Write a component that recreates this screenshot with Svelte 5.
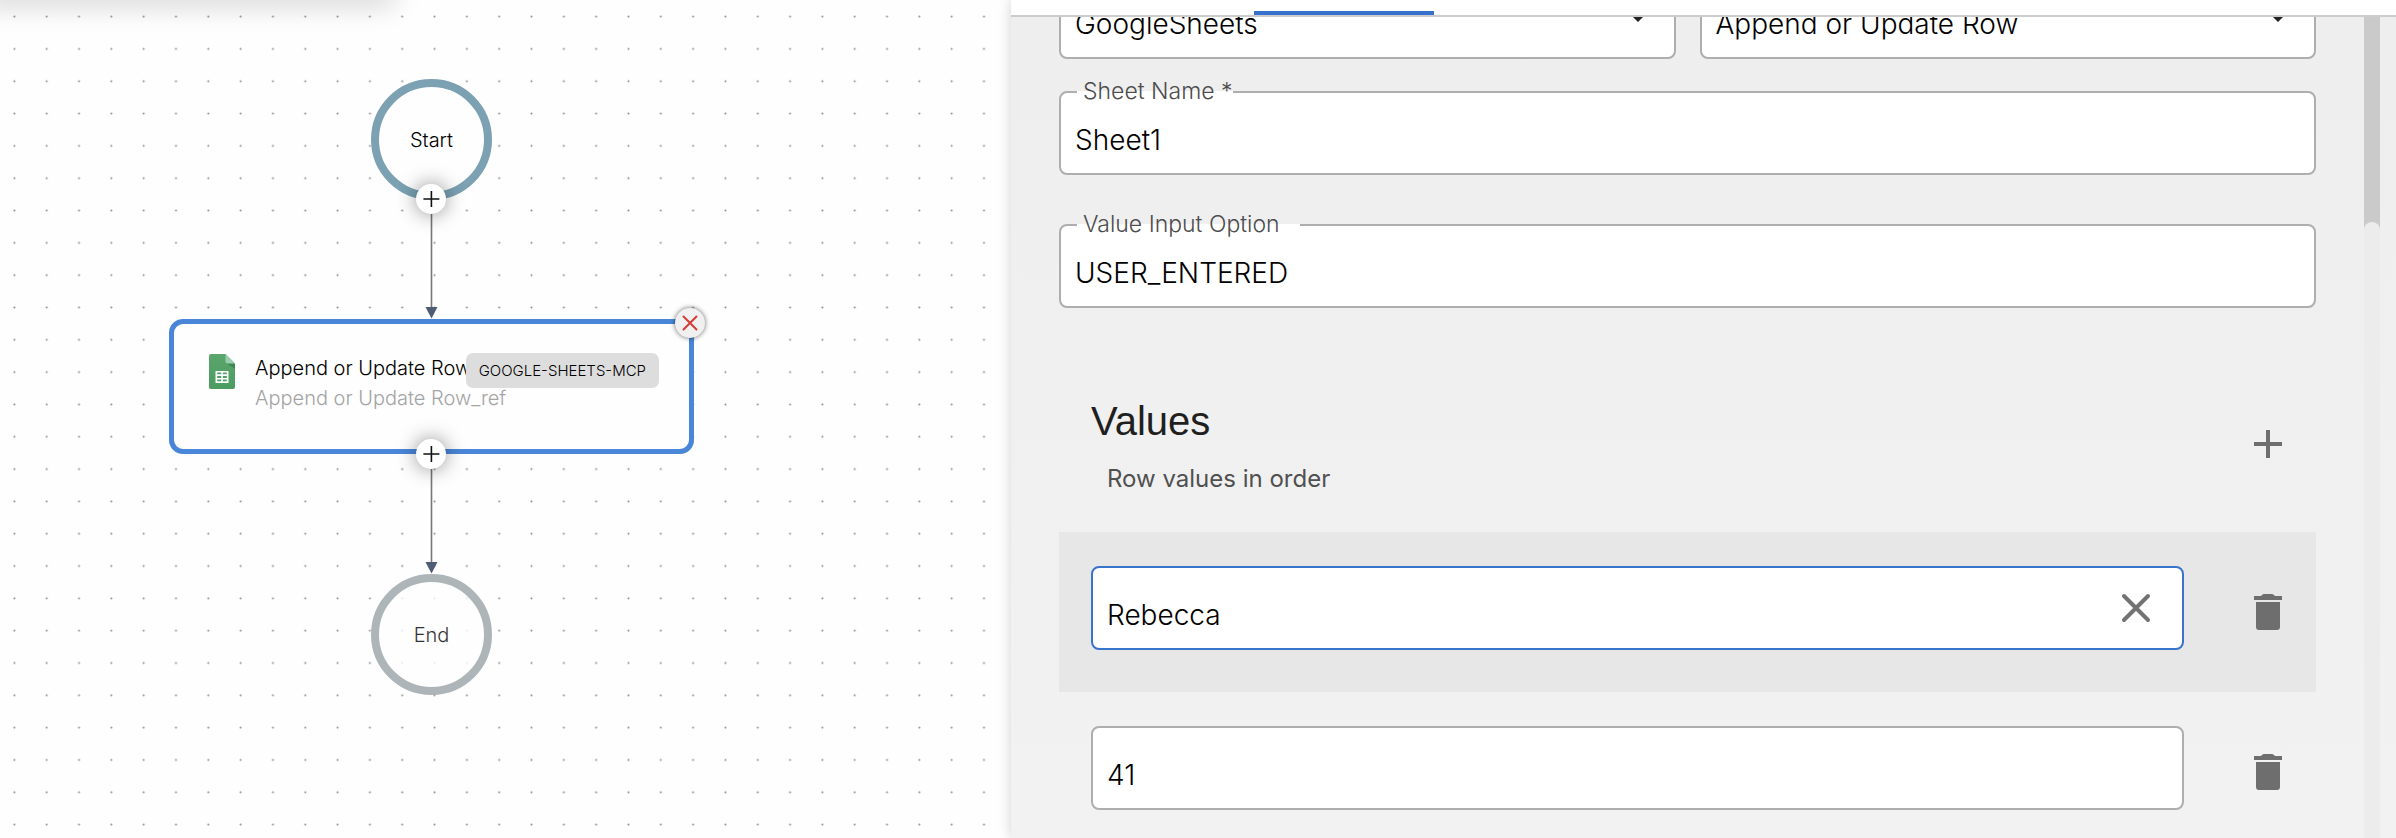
<script>
  let integration = $state('GoogleSheets');
  let action = $state('Append or Update Row');
  let sheetName = $state('Sheet1');
  let inputOption = $state('USER_ENTERED');
  let rows = $state([
    { value: 'Rebecca', active: true },
    { value: '41', active: false }
  ]);
</script>

{#snippet plus()}
  <svg viewBox="0 0 30 30" width="30" height="30" aria-hidden="true">
    <path d="M15.400 7v16M7.400 15h16" fill="none" stroke="#111" stroke-width="1.6" />
  </svg>
{/snippet}

<div class="app">
  <main class="canvas">
    <svg class="graph" aria-hidden="true">
      <defs>
        <pattern id="dots" x="-1.76" y="0.44" width="32.32" height="32.32" patternUnits="userSpaceOnUse">
          <circle cx="16.16" cy="16.16" r="1" fill="#8b8b8b" />
        </pattern>
      </defs>
      <rect width="100%" height="100%" fill="url(#dots)" />
      <path d="M431.5 199V308M431.5 454V564" stroke="#777" stroke-width="1.6" />
      <path d="M425.5 307h12l-6 11.5zM425.5 562h12l-6 11.5z" fill="#4d5b75" />
    </svg>
    <div class="toolbar-edge"></div>

    <div class="terminal start">Start</div>
    <div class="terminal end">End</div>

    <article class="step">
      <svg class="sheet-icon" viewBox="0 0 26 35" width="26" height="35" aria-hidden="true">
        <defs>
          <linearGradient id="sheet" x1="0" y1="0" x2="0" y2="1">
            <stop offset="0" stop-color="#5aa66d" />
            <stop offset="1" stop-color="#4b9c60" />
          </linearGradient>
        </defs>
        <path d="M2 0h14.5L26 9.5V33a2 2 0 0 1-2 2H2a2 2 0 0 1-2-2V2a2 2 0 0 1 2-2z" fill="url(#sheet)" />
        <path d="M17.5 9.2L26 15V9.5z" fill="#3f8551" />
        <path d="M16.5 0L26 9.5h-7.500a2 2 0 0 1-2-2z" fill="#97ceae" />
        <path d="M6.500 17h13v12h-13zM8.200 18.600v1.700h4v-1.700zM13.800 18.600v1.700h4v-1.700zM8.200 22v1.900h4v-1.900zM13.800 22v1.900h4v-1.900zM8.200 25.600v1.700h4v-1.700zM13.800 25.600v1.700h4v-1.700z" fill="#fff" fill-rule="evenodd" />
      </svg>
      <div class="step-text">
        <div>Append or Update Row</div>
        <div class="ref">Append or Update Row_ref</div>
      </div>
      <span class="badge">GOOGLE-SHEETS-MCP</span>
      <button class="round remove" aria-label="Remove step">
        <svg viewBox="0 0 30 30" width="30" height="30" aria-hidden="true">
          <path d="M8.500 8.500l13 13M21.500 8.500l-13 13" fill="none" stroke="#d43c36" stroke-width="2" stroke-linecap="round" />
        </svg>
      </button>
    </article>

    <button class="round add first" aria-label="Add step after Start">{@render plus()}</button>
    <button class="round add second" aria-label="Add step before End">{@render plus()}</button>
  </main>

  <aside class="panel">
    <header class="tabs"><div class="tab-indicator"></div></header>
    <div class="body">
      <form class="form" onsubmit={(e) => e.preventDefault()}>
        <div class="pair">
          <div class="select">
            <select class="box" aria-label="Integration" bind:value={integration}>
              <option>GoogleSheets</option>
            </select>
            <svg viewBox="0 0 20 10" width="20" height="10" aria-hidden="true"><path d="M0 0h20L10 10z" fill="#222" /></svg>
          </div>
          <div class="select">
            <select class="box" aria-label="Action" bind:value={action}>
              <option>Append or Update Row</option>
            </select>
            <svg viewBox="0 0 20 10" width="20" height="10" aria-hidden="true"><path d="M0 0h20L10 10z" fill="#222" /></svg>
          </div>
        </div>

        <div class="field">
          <label for="sheet-name">Sheet Name *</label>
          <input class="box" id="sheet-name" bind:value={sheetName} />
        </div>
        <div class="field optional">
          <label for="input-option">Value Input Option</label>
          <input class="box" id="input-option" bind:value={inputOption} />
        </div>

        <section class="values">
          <div class="values-head">
            <div class="values-text">
              <h2>Values</h2>
              <p>Row values in order</p>
            </div>
            <button class="icon" type="button" aria-label="Add value">
              <svg viewBox="0 0 24 24" width="48" height="48" aria-hidden="true"><path d="M19 13h-6v6h-2v-6H5v-2h6V5h2v6h6z" /></svg>
            </button>
          </div>
          {#each rows as row, i}
            <div class="row" class:active={row.active}>
              <div class="entry">
                <input class="box" aria-label={`Value ${i + 1}`} bind:value={row.value} />
                {#if row.active}
                  <button class="icon clear" type="button" aria-label="Clear value">
                    <svg viewBox="0 0 48 48" width="48" height="48" aria-hidden="true"><path d="M12 12l24 24M36 12L12 36" fill="none" stroke="#737373" stroke-width="4" stroke-linecap="round" /></svg>
                  </button>
                {/if}
              </div>
              <button class="icon" type="button" aria-label="Delete value">
                <svg viewBox="0 0 48 48" width="48" height="48" aria-hidden="true"><path d="M12 14h24v25a3 3 0 0 1-3 3H15a3 3 0 0 1-3-3zM10 8h7l1-1c.6-.7 1.300-1 2.200-1h7.600c.9 0 1.600.3 2.200 1l1 1h7v4H10z" /></svg>
              </button>
            </div>
          {/each}
        </section>
      </form>
      <div class="scrollbar"><div class="thumb"></div><div class="track"></div></div>
    </div>
  </aside>
</div>

<style>
  :global(body) {
    margin: 0;
  }
  .app {
    display: grid;
    grid-template-columns: 1011fr 1385fr;
    height: 100vh;
    overflow: hidden;
    background: #fefefe;
    color: #000;
    font-family: Inter, 'Liberation Sans', sans-serif;
    font-weight: 300;
  }
  button {
    padding: 0;
    border: 0;
    background: none;
    cursor: pointer;
  }
  svg {
    display: block;
  }

  /* Flow canvas */
  .canvas {
    position: relative;
    overflow: hidden;
    font-size: 20px;
  }
  .graph {
    position: absolute;
    inset: 0;
    width: 100%;
    height: 100%;
  }
  .toolbar-edge {
    position: absolute;
    top: -20px;
    left: -20px;
    width: 416px;
    height: 20px;
    border-radius: 8px;
    box-shadow: 0 4px 28px rgba(0, 0, 0, 0.2);
  }
  .terminal {
    position: absolute;
    left: 371px;
    display: grid;
    place-items: center;
    box-sizing: border-box;
    width: 121px;
    height: 121px;
    border: 8px solid #7ba1b2;
    border-radius: 50%;
    background: #fefefe;
  }
  .start {
    top: 79px;
  }
  .end {
    top: 574px;
    border-color: #9aa4a8;
    opacity: 0.8;
  }
  .step {
    position: absolute;
    top: 319px;
    left: 169px;
    display: flex;
    align-items: flex-start;
    box-sizing: border-box;
    width: 525px;
    height: 135px;
    padding: 30px 35px;
    border: 5px solid #4a86d8;
    border-radius: 14px;
    background: #fefefe;
  }
  .sheet-icon {
    flex: none;
  }
  .step-text {
    padding-left: 20px;
    line-height: 30px;
    white-space: nowrap;
  }
  .step-text div:first-child {
    margin-top: -1px;
  }
  .ref {
    color: #a4a4a4;
  }
  .badge {
    position: absolute;
    top: 29px;
    right: 30px;
    padding: 0 13px;
    border-radius: 7px;
    background: #dddddd;
    font-size: 15px;
    line-height: 35px;
  }
  .round {
    position: absolute;
    width: 30px;
    height: 30px;
    border-radius: 50%;
    background: #fff;
  }
  .add {
    left: 416px;
    box-shadow: 0 0 20px rgba(0, 0, 0, 0.45);
  }
  .first {
    top: 184px;
  }
  .second {
    top: 439px;
  }
  .remove {
    top: -16px;
    right: -16px;
    background: #f0f0f0;
    box-shadow: 0 0 5px rgba(0, 0, 0, 0.6);
  }

  /* Settings panel */
  .panel {
    z-index: 1;
    display: flex;
    flex-direction: column;
    min-width: 0;
    min-height: 0;
    background: linear-gradient(#eeeeee, #f2f2f2);
    box-shadow: 0 0 12px rgba(0, 0, 0, 0.18);
  }
  .tabs {
    flex: none;
    display: flex;
    align-items: flex-end;
    box-sizing: border-box;
    height: 17px;
    padding-left: 243px;
    border-bottom: 2px solid #cccccc;
    background: #fff;
  }
  .tab-indicator {
    width: 180px;
    height: 4px;
    background: #3571cd;
  }
  .body {
    flex: 1;
    display: flex;
    min-height: 0;
    padding-right: 16px;
    overflow: hidden;
  }
  .form {
    flex: 1;
    min-width: 0;
    margin-top: -42px;
    padding: 0 48px;
  }
  .box {
    display: block;
    box-sizing: border-box;
    width: 100%;
    height: 84px;
    margin: 0;
    padding: 13px 14px 0;
    border: 2px solid #aeaeae;
    border-radius: 8px;
    outline: 0;
    appearance: none;
    background: #fff;
    color: #000;
    font: inherit;
    font-size: 28px;
  }
  .pair {
    display: grid;
    grid-template-columns: 1fr 1fr;
    gap: 24px;
  }
  .select {
    position: relative;
  }
  .select svg {
    position: absolute;
    top: 37px;
    right: 28px;
    pointer-events: none;
  }
  .field {
    position: relative;
    margin-top: 32px;
  }
  .field label {
    position: absolute;
    top: -16px;
    left: 18px;
    padding: 0 0 0 6px;
    background: linear-gradient(#fff, #fff) no-repeat 0 16px / 100% 2px;
    color: #4c4c4c;
    font-size: 23px;
    line-height: 32px;
    white-space: nowrap;
  }
  .optional {
    margin-top: 49px;
  }
  .optional label {
    padding-right: 20px;
  }
  .values {
    margin-top: 48px;
  }
  .values-head {
    display: flex;
    align-items: center;
    justify-content: space-between;
    height: 176px;
    padding: 0 24px 0 32px;
  }
  .values-text {
    padding-top: 4px;
  }
  h2 {
    margin: 0;
    color: #1f1f1f;
    font: 400 40px/56px 'Liberation Sans', sans-serif;
  }
  p {
    margin: 10px 0 0;
    padding-left: 16px;
    color: #505050;
    font-size: 24px;
    font-weight: 400;
    line-height: 40px;
  }
  .icon {
    flex: none;
    width: 48px;
    height: 48px;
  }
  .icon svg {
    fill: #6e6e6e;
  }
  .row {
    display: flex;
    align-items: center;
    gap: 60px;
    height: 160px;
    padding: 0 24px 0 32px;
  }
  .active {
    background: #e7e7e7;
  }
  .entry {
    position: relative;
    flex: 1;
    margin-bottom: 8px;
  }
  .active .box {
    border-color: #3874cb;
  }
  .clear {
    position: absolute;
    top: 18px;
    right: 24px;
  }
  .scrollbar {
    flex: none;
    width: 16px;
    background: #eaeaea;
  }
  .thumb {
    height: 213px;
    background: #cacaca;
  }
  .track {
    height: 100%;
    margin-top: -8px;
    border-radius: 8px 8px 0 0;
    background: #ececec;
  }
</style>
